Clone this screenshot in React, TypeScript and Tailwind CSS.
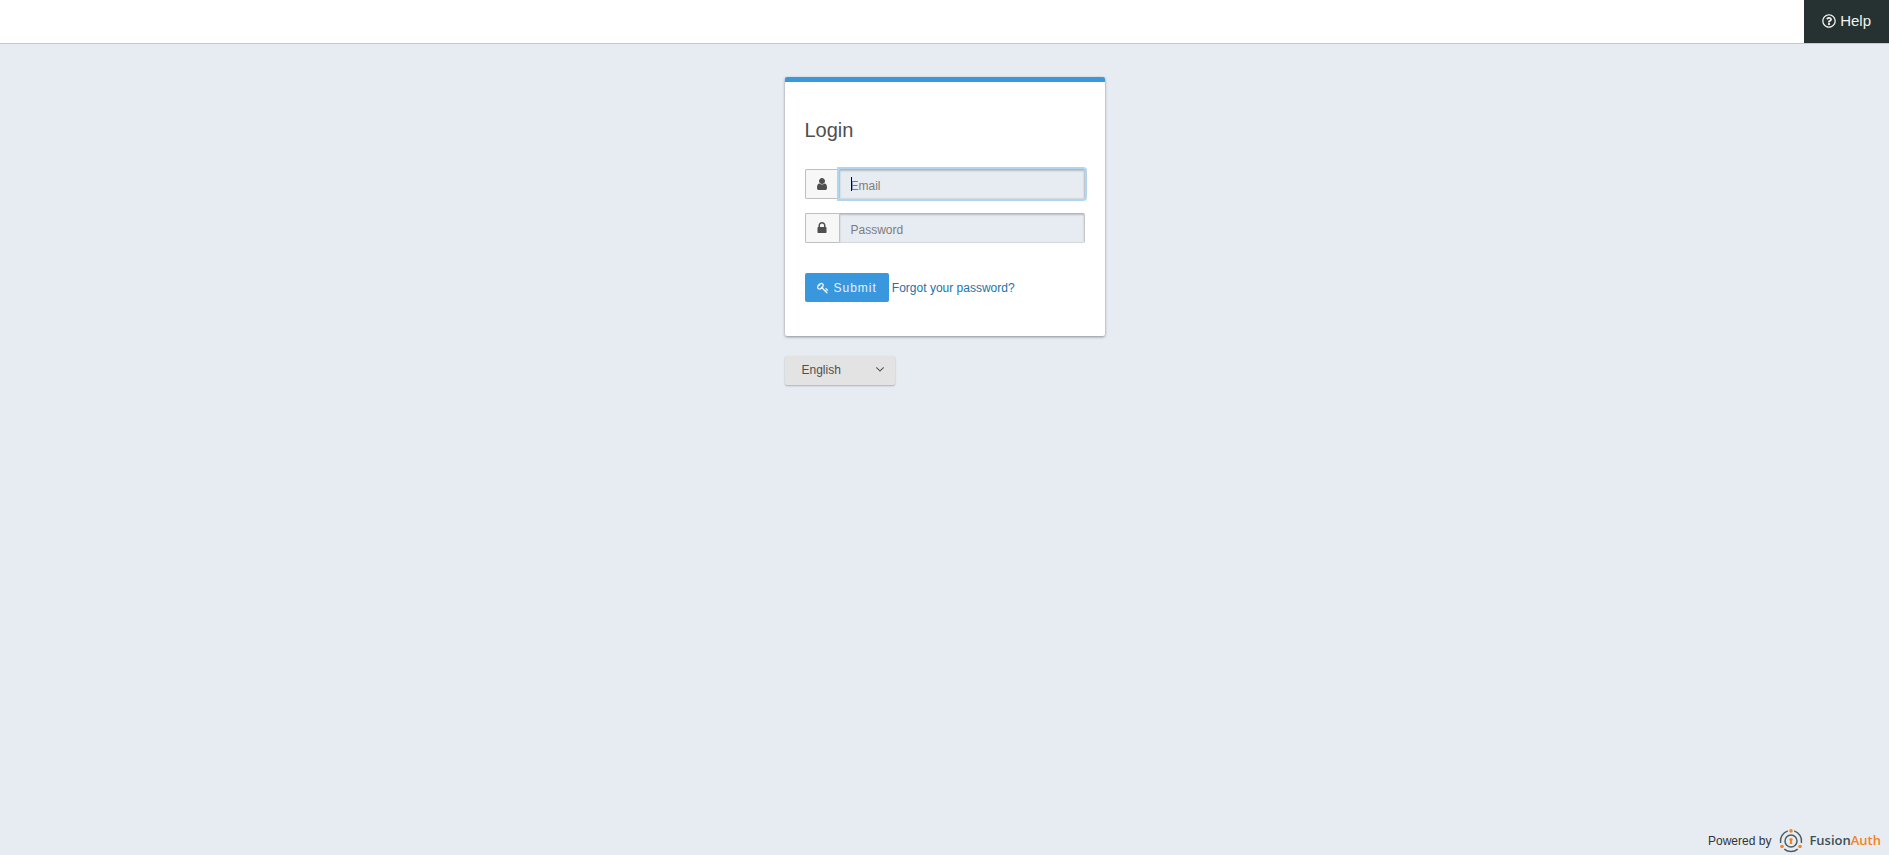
import { useState } from 'react'
import { FaRegQuestionCircle } from 'react-icons/fa'

const iconPaths = {
  user: 'M1536 1399q0 109-62.5 187t-150.5 78h-854q-88 0-150.5-78t-62.5-187q0-85 8.5-160.5t31.5-152 58.5-131 94-89 134.5-34.5q131 128 313 128t313-128q76 0 134.5 34.5t94 89 58.5 131 31.5 152 8.5 160.5zm-256-887q0 159-112.5 271.5t-271.5 112.5-271.5-112.5-112.5-271.5 112.5-271.5 271.5-112.5 271.5 112.5 112.5 271.5z',
  lock: 'M640 768h512v-192q0-106-75-181t-181-75-181 75-75 181v192zm832 96v576q0 40-28 68t-68 28h-960q-40 0-68-28t-28-68v-576q0-40 28-68t68-28h32v-192q0-184 132-316t316-132 316 132 132 316v192h32q40 0 68 28t28 68z',
  key: 'M832 512q0-80-56-136t-136-56-136 56-56 136q0 42 19 83-41-19-83-19-80 0-136 56t-56 136 56 136 136 56 136-56 56-136q0-42-19-83 41 19 83 19 80 0 136-56t56-136zm851 704q0 17-49 66t-66 49q-9 0-28.5-16t-36.5-33-38.5-40-24.5-26l-96 96 220 220q28 28 28 68 0 42-39 81t-81 39q-40 0-68-28l-671-671q-176 131-365 131-163 0-265.5-102.5t-102.5-265.5q0-160 95-313t248-248 313-95q163 0 265.5 102.5t102.5 265.5q0 189-131 365l355 355 96-96q-3-3-26-24.5t-40-38.5-33-36.5-16-28.5q0-17 49-66t66-49q13 0 23 10 6 6 46 44.5t82 79.5 86.5 86 73 78 28.5 41z',
  angleDown:
    'M1395 736q0 13-10 23l-466 466q-10 10-23 10t-23-10l-466-466q-10-10-10-23t10-23l50-50q10-10 23-10t23 10l393 393 393-393q10-10 23-10t23 10l50 50q10 10 10 23z',
}

function Icon({ name, className }: { name: keyof typeof iconPaths; className?: string }) {
  return (
    <svg viewBox="0 0 1792 1792" fill="currentColor" aria-hidden="true" className={className}>
      <path d={iconPaths[name]} />
    </svg>
  )
}

function LogoMark() {
  return (
    <svg viewBox="0 0 24 24" fill="none" aria-hidden="true" className="size-6">
      <g stroke="#4b5e61" strokeWidth="1.5">
        <path d="M15.2 1.9A10.6 10.6 0 0 1 22.4 14" />
        <path d="M18.7 20.2A10.6 10.6 0 0 1 5.3 20.2" />
        <path d="M1.6 14A10.6 10.6 0 0 1 8.8 1.9" />
        <circle cx="12" cy="12" r="6" />
      </g>
      <g fill="#f58320">
        <circle cx="12" cy="1.9" r="1.8" />
        <circle cx="21" cy="17.5" r="1.8" />
        <circle cx="3" cy="17.5" r="1.8" />
        <circle cx="12" cy="10.6" r="1.7" />
        <path d="M11.2 11h1.6l.5 4h-2.6z" />
      </g>
    </svg>
  )
}

type FieldProps = {
  id: string
  type: string
  label: string
  icon: 'user' | 'lock'
  autoFocus?: boolean
}

function Field({ id, type, label, icon, autoFocus }: FieldProps) {
  const [value, setValue] = useState('')

  return (
    <div className="flex h-[30px]">
      <label
        htmlFor={id}
        aria-label={label}
        className="flex w-[34px] shrink-0 items-center justify-center rounded-l-xs border border-r-0 border-[#bfbfbf] bg-[#f7f7f7] text-[#4f4f4f]"
      >
        <Icon name={icon} className="size-3.5" />
      </label>
      <div className="relative flex min-w-0 flex-1">
        <input
          id={id}
          name={id}
          type={type}
          value={value}
          onChange={(e) => setValue(e.target.value)}
          placeholder={label}
          autoFocus={autoFocus}
          autoComplete="off"
          className="peer w-full rounded-r-xs border border-t-[#b2b6b9] border-r-[#c3c7c9] border-b-[#d5d9dc] border-l-[#bfc3c6] bg-[#e7ecf3] px-[11px] pt-1 text-xs text-[#333] shadow-[inset_0_1px_2px_rgba(0,0,0,0.2)] outline-none placeholder:text-[#7c7c7c] placeholder-shown:caret-transparent focus:shadow-[inset_0_1px_2px_rgba(0,0,0,0.2),0_0_0_2px_#afd6f3]"
        />
        {/* caret for the empty, focused state */}
        <span className="pointer-events-none absolute top-2 left-3 hidden h-3.5 w-px bg-black peer-placeholder-shown:peer-focus:block" />
      </div>
    </div>
  )
}

export default function App() {
  const [locale, setLocale] = useState('en')

  return (
    <div className="flex min-h-screen flex-col bg-[#e7ecf3] font-['Liberation_Sans',Arial,sans-serif] text-xs text-[#4f4f4f]">
      <header className="flex h-11 justify-end border-b border-[#c4c9ce] bg-white">
        <a href="#help" className="flex items-center gap-1 bg-[#263231] px-[18px] pb-0.5 text-[15px] text-[#f2f2f2]">
          <FaRegQuestionCircle className="size-3.5" />
          Help
        </a>
      </header>

      <main className="mx-auto w-full max-w-80 flex-1 pt-[33px]">
        <section className="rounded-xs border-t-[5px] border-[#3998dd] bg-white px-5 pt-9 pb-[34px] shadow-[0_1px_3px_rgba(0,0,0,0.4)]">
          <h1 className="text-xl leading-6">Login</h1>
          <form onSubmit={(e) => e.preventDefault()}>
            <div className="flex flex-col gap-3.5 pt-[27px]">
              <Field id="loginId" type="text" label="Email" icon="user" autoFocus />
              <Field id="password" type="password" label="Password" icon="lock" />
            </div>
            <div className="flex items-center gap-[3px] pt-[30px]">
              <button
                type="submit"
                className="flex h-[29px] items-center gap-[5px] rounded-xs bg-[#3998dd] px-3 tracking-[1px] text-[#e6f2fb]"
              >
                <Icon name="key" className="size-3" />
                Submit
              </button>
              <a href="#forgot" className="text-[#2173ac]">
                Forgot your password?
              </a>
            </div>
          </form>
        </section>

        <div className="relative mt-5 w-[110px]">
          <select
            aria-label="Language"
            value={locale}
            onChange={(e) => setLocale(e.target.value)}
            className="h-[29px] w-full appearance-none rounded-xs bg-[#e3e3e3] pr-8 pb-0.5 pl-[17px] shadow-[0_1px_2px_rgba(0,0,0,0.25)]"
          >
            <option value="en">English</option>
          </select>
          <Icon name="angleDown" className="pointer-events-none absolute top-1.5 right-2 size-3.5" />
        </div>
      </main>

      <footer className="flex items-center justify-end gap-2 px-2 pb-[2px] text-[#333]">
        <span>Powered by</span>
        <a href="#fusionauth" className="flex items-center gap-1.5">
          <LogoMark />
          <span className="font-['Open_Sans',sans-serif] text-[13px] font-semibold text-[#3d5053]">
            Fusion<span className="text-[#f58320]">Auth</span>
          </span>
        </a>
      </footer>
    </div>
  )
}
